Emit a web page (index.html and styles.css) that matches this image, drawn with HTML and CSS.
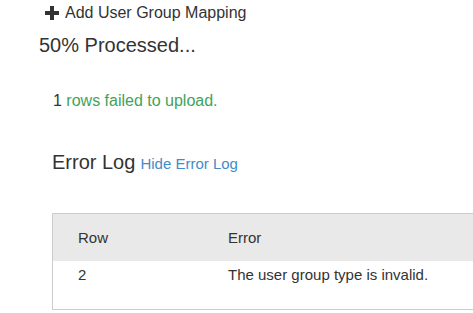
FILE: index.html
```html
<!DOCTYPE html>
<html>
<head>
    <title>Upload Status</title>
    <link rel="stylesheet" href="styles.css">
</head>
<body>
    <div class="page">
        <a class="add-link" href="#">
            <svg class="plus" width="14" height="14" viewBox="0 0 14 14"><path d="M5 0h4v5h5v4H9v5H5V9H0V5h5z" fill="#333"/></svg>
            Add User Group Mapping
        </a>
        <h2 class="progress">50% Processed...</h2>

        <p class="summary"><span class="count">1</span> rows failed to upload.</p>

        <div class="log-title">
            <h3>Error Log</h3>
            <a href="#" class="toggle">Hide Error Log</a>
        </div>

        <div class="log-box">
            <table class="log-table">
                <thead>
                    <tr><th class="col-row">Row</th><th>Error</th></tr>
                </thead>
                <tbody>
                    <tr><td class="col-row">2</td><td>The user group type is invalid.</td></tr>
                </tbody>
            </table>
        </div>
    </div>
</body>
</html>
```

FILE: styles.css
```css
body {
    margin: 0;
    font-family: "Liberation Sans", Arial, sans-serif;
    color: #333;
    background: #fff;
    overflow: hidden;
}

.page {
    padding-left: 39px;
    width: 600px;
}

.add-link {
    display: flex;
    align-items: center;
    gap: 6px;
    margin-left: 6px;
    font-size: 16px;
    line-height: 26px;
    height: 26px;
    color: #333;
    text-decoration: none;
}

.progress {
    margin: 5px 0 0;
    font-size: 20px;
    font-weight: normal;
    line-height: 28px;
}

.summary {
    margin: 31px 0 0 14px;
    font-size: 16px;
    line-height: 22px;
    color: #3fa35a;
}

.count {
    color: #333;
}

.log-title {
    display: flex;
    align-items: baseline;
    gap: 5px;
    margin: 36px 0 0 13px;
}

.log-title h3 {
    margin: 0;
    font-size: 20px;
    font-weight: normal;
    line-height: 28px;
}

.toggle {
    font-size: 15px;
    color: #428bca;
    text-decoration: none;
}

.log-box {
    margin: 37px 0 0 13px;
    border: 1px solid #ccc;
    padding-bottom: 24px;
}

.log-table {
    width: 100%;
    border-collapse: collapse;
    font-size: 15px;
}

.log-table th {
    background: #e9e9e9;
    font-weight: normal;
    text-align: left;
    height: 47px;
    padding: 0 0 0 25px;
}

.log-table td {
    padding: 3px 0 0 25px;
    line-height: 21px;
}

.col-row {
    width: 125px;
}
```
